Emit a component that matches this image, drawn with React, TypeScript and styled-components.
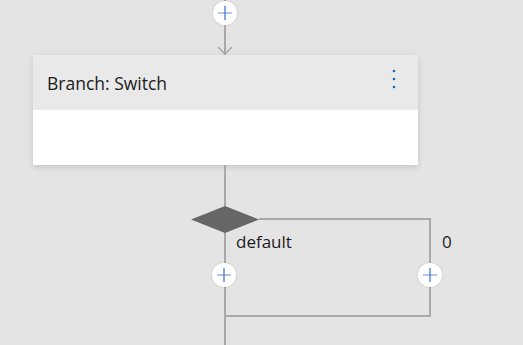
import { createGlobalStyle, styled } from 'styled-components';

const GlobalStyle = createGlobalStyle`
  html, body {
    margin: 0;
    padding: 0;
    background: #e4e4e4;
    overflow: hidden;
    font-family: "Open Sans", "Noto Sans", sans-serif;
    color: #1b1b1b;
  }
`;

const LINE = '#a9a9a9';

const Canvas = styled.div`
  width: 384px;
  height: 345px;
  margin-left: 33px;
  display: flex;
  flex-direction: column;
  align-items: center;
`;

const Connector = styled.div<{ $h: number }>`
  width: 2px;
  height: ${(p) => p.$h}px;
  background: ${LINE};
  flex-shrink: 0;
`;

const ArrowLine = styled.div`
  position: relative;
  width: 2px;
  height: 30px;
  background: ${LINE};
  flex-shrink: 0;

  svg {
    position: absolute;
    left: -7px;
    bottom: 0;
  }
`;

const AddButton = styled.button`
  width: 24px;
  height: 24px;
  border-radius: 50%;
  border: none;
  padding: 0;
  background: #fff;
  box-shadow: 0 0 3px rgba(0, 0, 0, 0.12);
  display: flex;
  align-items: center;
  justify-content: center;
  flex-shrink: 0;
  cursor: pointer;
`;

const Card = styled.div`
  align-self: flex-start;
  width: 385px;
  height: 110px;
  background: #fff;
  box-shadow: 0 2px 6px rgba(0, 0, 0, 0.14);
  display: flex;
  flex-direction: column;
  flex-shrink: 0;
`;

const CardHeader = styled.div`
  height: 55px;
  background: #e9e9e9;
  display: flex;
  align-items: center;
  justify-content: space-between;
  padding: 0 22px 0 14px;
`;

const Title = styled.span`
  font-size: 17.5px;
  line-height: 20px;
`;

const MenuDots = styled.div`
  width: 4px;
  height: 20px;
  display: flex;
  margin-top: -8px;
`;

const BranchArea = styled.div`
  position: relative;
  align-self: flex-start;
  width: 385px;
  height: 139px;
  flex-shrink: 0;
`;

const Diamond = styled.svg`
  position: absolute;
  left: 158px;
  top: 0;
`;

const Wire = styled.div<{ $x: number; $y: number; $w: number; $h: number }>`
  position: absolute;
  left: ${(p) => p.$x}px;
  top: ${(p) => p.$y}px;
  width: ${(p) => p.$w}px;
  height: ${(p) => p.$h}px;
  background: ${LINE};
`;

const BranchLabel = styled.span<{ $x: number }>`
  position: absolute;
  left: ${(p) => p.$x}px;
  top: 26px;
  font-size: 17px;
  line-height: 20px;
`;

const BranchAdd = styled(AddButton)<{ $x: number }>`
  position: absolute;
  left: ${(p) => p.$x}px;
  top: 57px;
`;

const PlusIcon = () => (
  <svg width="14" height="14" viewBox="0 0 14 14">
    <path d="M0 7h14" stroke="#7f9ee0" strokeWidth="1.2" />
    <path d="M7 0v14" stroke="#2f6fd6" strokeWidth="1.2" />
  </svg>
);

const Dots = () => (
  <svg width="4" height="20" viewBox="0 0 4 20">
    <circle cx="2" cy="2" r="1.3" fill="#0f6fc6" />
    <circle cx="2" cy="10" r="1.3" fill="#0f6fc6" />
    <circle cx="2" cy="18" r="1.3" fill="#0f6fc6" />
  </svg>
);

export default function App() {
  return (
    <>
      <GlobalStyle />
      <Canvas>
        <Connector $h={1} />
        <AddButton aria-label="Insert step">
          <PlusIcon />
        </AddButton>
        <ArrowLine>
          <svg width="16" height="9" viewBox="0 0 16 9">
            <path d="M1 1l7 7 7-7" fill="none" stroke={LINE} strokeWidth="1.6" />
          </svg>
        </ArrowLine>
        <Card>
          <CardHeader>
            <Title>Branch: Switch</Title>
            <MenuDots>
              <Dots />
            </MenuDots>
          </CardHeader>
        </Card>
        <Connector $h={41} />
        <BranchArea>
          <Wire $x={191} $y={26} $w={2} $h={113} />
          <Wire $x={226} $y={12} $w={172} $h={2} />
          <Wire $x={396} $y={12} $w={2} $h={99} />
          <Wire $x={192} $y={109} $w={206} $h={2} />
          <Diamond width="68" height="27" viewBox="0 0 68 27">
            <polygon points="0,13.5 34,0 68,13.5 34,27" fill="#666" />
          </Diamond>
          <BranchLabel $x={203}>default</BranchLabel>
          <BranchLabel $x={409}>0</BranchLabel>
          <BranchAdd $x={179} aria-label="Add default step">
            <PlusIcon />
          </BranchAdd>
          <BranchAdd $x={385} aria-label="Add case step">
            <PlusIcon />
          </BranchAdd>
        </BranchArea>
      </Canvas>
    </>
  );
}
